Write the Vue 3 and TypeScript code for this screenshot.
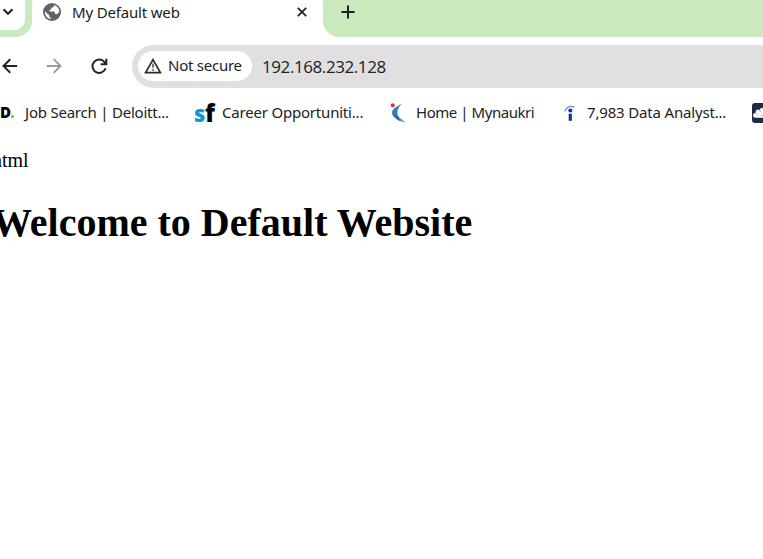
<script setup lang="ts">
interface Bookmark {
  id: 'deloitte' | 'success' | 'naukri' | 'indeed'
  label: string
}

const bookmarks: Bookmark[] = [
  { id: 'deloitte', label: 'Job Search | Deloitt...' },
  { id: 'success', label: 'Career Opportuniti...' },
  { id: 'naukri', label: 'Home | Mynaukri' },
  { id: 'indeed', label: '7,983 Data Analyst...' },
]
</script>

<template>
  <div class="browser">
    <header class="tabstrip">
      <button class="tab-search" aria-label="Search tabs">
        <svg width="12" height="8" viewBox="0 0 12 8"><path d="M1.5 1.3 6 5.8l4.5-4.5" fill="none" stroke="#1f2024" stroke-width="2" /></svg>
      </button>
      <div class="tab">
        <svg class="flare" width="16" height="16" viewBox="0 0 16 16"><path d="M16 0v16H0A16 16 0 0 0 16 0Z" fill="#fff" /></svg>
        <svg class="globe" width="18" height="18" viewBox="0 0 18 18">
          <circle cx="9" cy="9" r="9" fill="#5f6368" />
          <path d="M10.8 2.1C11.2 3 10.8 4.2 9.7 4.4L8.2 4.7v1.6L6.6 7v1.6h4c1 0 1.4.7 1.4 1.6v.9h1.7c.9 0 1.4-.7 1.6-1.4.3-.7.7-1 1-1A7.2 7.2 0 0 0 10.8 2.1ZM1.8 8.2l4.6 4.2v1.1c0 .8.6 1.2 1.5 1.2v1.4a7.2 7.2 0 0 1-6.1-7.9Z" fill="#fff" />
        </svg>
        <span class="tab-title">My Default web</span>
        <svg class="close" width="10" height="10" viewBox="0 0 10 10"><path d="m.8.8 8.4 8.4M9.2.8.8 9.2" stroke="#25262a" stroke-width="1.9" /></svg>
        <svg class="flare flare-right" width="16" height="16" viewBox="0 0 16 16"><path d="M0 0v16h16A16 16 0 0 1 0 0Z" fill="#fff" /></svg>
      </div>
      <svg class="new-tab" width="14" height="14" viewBox="0 0 14 14"><path d="M7 .5v13M.5 7h13" stroke="#1f2024" stroke-width="2" /></svg>
    </header>

    <nav class="toolbar">
      <svg class="back" width="16" height="16" viewBox="0 0 16 16"><path d="M15.2 8H2M8.3 1.2 1.5 8l6.8 6.8" fill="none" stroke="#222327" stroke-width="2" /></svg>
      <svg class="forward" width="16" height="16" viewBox="0 0 16 16"><path d="M.8 8H14M7.7 1.2 14.5 8l-6.8 6.8" fill="none" stroke="#9b9b9b" stroke-width="1.9" /></svg>
      <svg class="reload" width="17" height="17" viewBox="0 0 17 17"><path d="M14.6 10.2a6.7 6.7 0 1 1-1.1-6.1l1.5 1.8M15.3.7v5.5H9.7" fill="none" stroke="#222327" stroke-width="2" /></svg>
      <div class="omnibox">
        <div class="security">
          <svg width="18" height="16" viewBox="0 0 18 16"><path d="M9 1.7 16.4 14.6H1.6Z" fill="none" stroke="#292a2e" stroke-width="1.7" /><path d="M9 5.5v4.2M9 11v1.8" stroke="#55565a" stroke-width="1.6" /></svg>
          <span class="security-text">Not secure</span>
        </div>
        <span class="address">192.168.232.128</span>
      </div>
    </nav>

    <div class="bookmarks">
      <div v-for="item in bookmarks" :key="item.id" class="bookmark" :class="item.id">
        <span v-if="item.id === 'deloitte'" class="icon d-icon">D<i class="dot"></i></span>
        <span v-else-if="item.id === 'success'" class="icon sf-icon"><b class="s">s</b><b class="f">f</b></span>
        <svg v-else-if="item.id === 'naukri'" class="icon" width="20" height="20" viewBox="0 0 20 20">
          <defs><linearGradient id="naukri-blue" x1="0" y1="0" x2="1" y2="1"><stop offset="0" stop-color="#338dc9" /><stop offset=".6" stop-color="#256fae" /><stop offset="1" stop-color="#bfdeed" /></linearGradient></defs>
          <path d="M11.8.8C6 3.7 2 6.5 2 9.8c0 4.3 6.5 9.3 15 9.9-6-3-9.8-6.4-9.8-9.9 0-3.2 2-6.4 4.6-9Z" fill="url(#naukri-blue)" />
          <circle cx="2.7" cy="2.2" r="2" fill="#f32635" />
        </svg>
        <svg v-else class="icon" width="12" height="17" viewBox="0 0 12 17">
          <path d="M.8 6.4C2 2.4 6.2-.2 10.5 2.3" fill="none" stroke="#688ac4" stroke-width="1.3" />
          <circle cx="6.3" cy="5.5" r="2" fill="#073a9c" /><path d="M4.7 8.7h3.2v7.1H4.7Z" fill="#073a9c" />
        </svg>
        <span class="label">{{ item.label }}</span>
      </div>
      <svg class="cloud" width="20" height="20" viewBox="0 0 20 20">
        <rect width="20" height="20" rx="3" fill="#1c2b47" />
        <path d="M3 14.7c-3.2-1-2.2-5 .6-4.7C3.2 7 6 5.8 7.3 7.2 9.5 3 15 5 14.8 8.4c4 0 4 6.3 0 6.3Z" fill="#fff" />
        <path d="M4 10.2c1 .1 1.7.7 2 1.6m1.5-4.4 1.6 2m-.2 3.5 2-1.2" fill="none" stroke="#a5adba" />
      </svg>
    </div>

    <main class="page">
      <p>html</p>
      <h1>Welcome to Default Website</h1>
    </main>
  </div>
</template>

<style>
body { margin: 0; overflow: hidden; }
</style>

<style scoped>
.browser { width: 763px; height: 559px; overflow: hidden; background: #fff; color: #202124; font-family: "Noto Sans", "Open Sans", sans-serif; }
svg { display: block; flex-shrink: 0; }
.tabstrip { height: 37px; display: flex; align-items: flex-start; background: #cae9be; }
.tab-search { width: 25px; height: 30px; box-sizing: border-box; display: flex; align-items: flex-start; padding: 8px 0 0 2px; border: 0; border-radius: 0 0 11px 0; background: #fff; }
.tab { position: relative; box-sizing: border-box; width: 291px; height: 45px; margin: -8px 0 0 7px; padding: 11px 16px 0 11px; display: flex; align-items: flex-start; background: #fff; border-radius: 12px 12px 0 0; }
.flare { position: absolute; left: -16px; bottom: 0; }
.flare-right { left: auto; right: -16px; }
.tab-title { margin: -1px 0 0 11px; font-size: 15px; line-height: 20px; white-space: nowrap; letter-spacing: -.17px; }
.close { margin: 4px 0 0 auto; }
.new-tab { margin: 5px 0 0 18px; }
.toolbar { height: 58px; display: flex; align-items: center; }
.back { margin-left: 2px; }
.forward { margin-left: 28px; }
.reload { margin-left: 29px; }
.omnibox { height: 43px; flex: 1; margin-left: 24px; display: flex; align-items: center; background: #e0e0e0; border-radius: 22px 0 0 22px; }
.security { height: 30px; width: 114px; box-sizing: border-box; margin-left: 6px; padding-left: 6px; display: flex; align-items: center; gap: 6px; border-radius: 15px; background: #fff; }
.security-text { padding-bottom: 2px; font-size: 15px; line-height: 20px; letter-spacing: -.25px; white-space: nowrap; }
.address { margin-left: 10px; font-family: "Open Sans", sans-serif; font-size: 17px; font-weight: 400; letter-spacing: -.42px; }
.bookmarks { height: 36px; display: flex; align-items: center; }
.bookmark { display: flex; align-items: center; height: 22px; flex-shrink: 0; }
.deloitte { width: 194px; }
.success { width: 196px; }
.naukri { width: 174px; }
.indeed { width: 188px; }
.icon { flex-shrink: 0; }
.d-icon { width: 25px; padding-bottom: 2px; box-sizing: border-box; display: flex; align-items: baseline; font: 800 15px/20px "Open Sans", sans-serif; color: #000; }
.dot { width: 3px; height: 3px; background: #82bb23; border-radius: 50%; }
.sf-icon { width: 21px; height: 22px; display: flex; line-height: 22px; font-family: "Open Sans", sans-serif; }
.s { width: 11px; color: #1497d4; font-size: 22px; font-weight: 800; }
.f { color: #000; font-size: 24px; font-weight: 800; }
.label { padding-bottom: 2px; font-size: 15px; line-height: 20px; letter-spacing: -.22px; white-space: nowrap; }
.success .label { margin-left: 7px; letter-spacing: -.2px; }
.naukri .label { margin-left: 6px; letter-spacing: -.45px; }
.indeed .label { margin-left: 11px; letter-spacing: -.17px; }
.page { box-sizing: border-box; height: 428px; padding-top: 18px; overflow: hidden; color: #000; font-family: "Liberation Serif", serif; }
.page p { margin: 0 0 0 -8px; font-size: 20px; line-height: 23px; }
.page h1 { margin: 28px 0 0 -8px; font-size: 40px; line-height: 46px; white-space: nowrap; }
</style>
